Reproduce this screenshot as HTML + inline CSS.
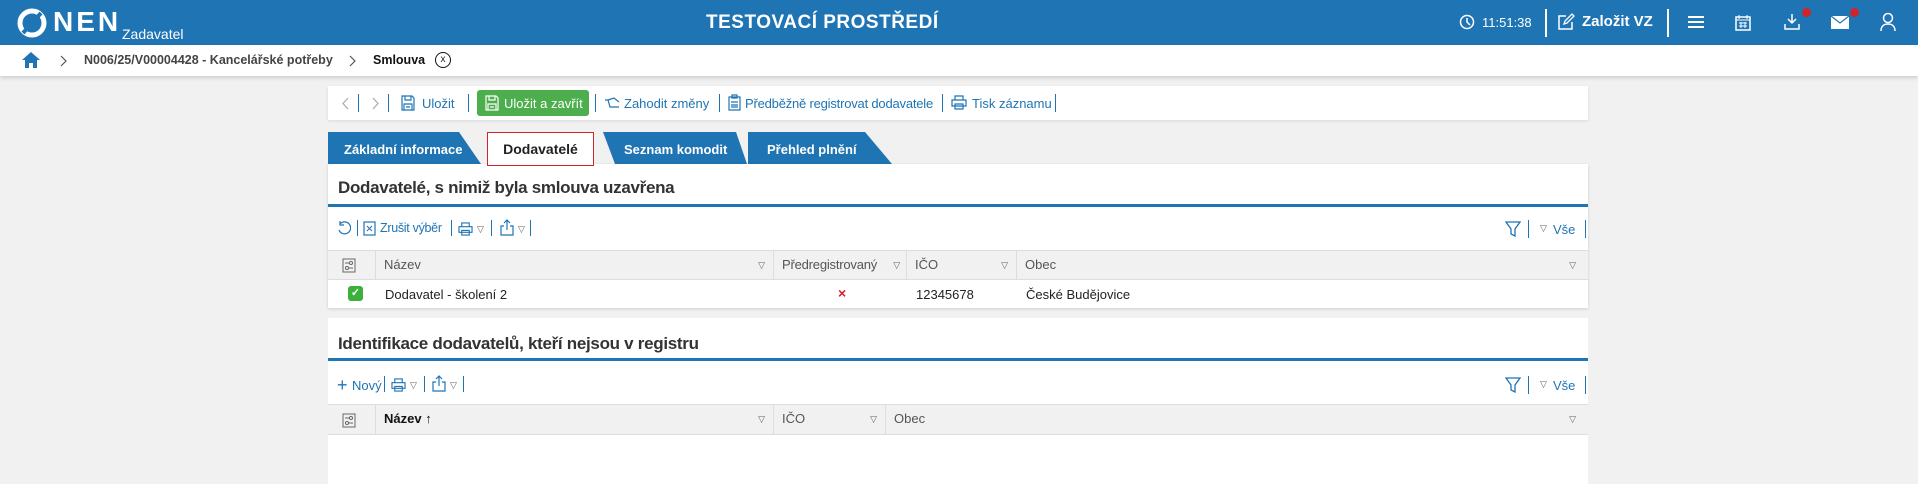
<!DOCTYPE html>
<html><head><meta charset="utf-8"><style>
*{box-sizing:border-box;margin:0;padding:0}
body{width:1918px;height:484px;overflow:hidden;background:#f1f1f1;font-family:"Liberation Sans",Arial,sans-serif;font-size:13px;color:#222;position:relative}
.abs{position:absolute}
.hdr{left:0;top:0;width:1918px;height:45px;background:#1f74b4;color:#fff}
.bc{left:0;top:45px;width:1918px;height:31px;background:#fff;box-shadow:0 2px 4px rgba(0,0,0,.15)}
.blue{color:#1f74b4}
.sep{position:absolute;width:1px;background:#1f74b4}
.tb{left:328px;top:86px;width:1260px;height:34px;background:#fff;box-shadow:0 1px 3px rgba(0,0,0,.1)}
.tab{position:absolute;top:132px;height:32px;background:#1f74b4;color:#fff;font-weight:bold;font-size:13px;line-height:36px}
.sec{position:absolute;left:328px;width:1260px;background:#fff}
.title{position:absolute;left:10px;font-size:17px;font-weight:bold;color:#333;letter-spacing:-.3px}
.bl{position:absolute;left:0;width:1260px;height:3px;background:#1f74b4}
.gh{position:absolute;left:0;width:1260px;background:#f1f1f1;border-top:1px solid #ddd;border-bottom:1px solid #ddd}
.col{position:absolute;top:0;bottom:0;border-left:1px solid #ddd;color:#555;line-height:28px;padding-left:8px}
.tri{position:absolute;font-size:9px;color:#666}
</style></head><body>
<div class="abs hdr">
 <svg class="abs" style="left:17px;top:8px" width="30" height="30" viewBox="0 0 30 30"><circle cx="15" cy="15" r="12" fill="none" stroke="#fff" stroke-width="5"/><path d="M6 25 L24 5" stroke="#1f74b4" stroke-width="4"/></svg>
 <div class="abs" style="left:53px;top:6px;font-size:28px;font-weight:bold;letter-spacing:3px">NEN</div>
 <div class="abs" style="left:122px;top:26px;font-size:14px">Zadavatel</div>
 <div class="abs" style="left:706px;top:12px;font-size:19px;font-weight:bold;letter-spacing:.5px">TESTOVACÍ PROSTŘEDÍ</div>
 <svg class="abs" style="left:1459px;top:14px" width="16" height="16" viewBox="0 0 16 16"><circle cx="8" cy="8" r="6.5" fill="none" stroke="#fff" stroke-width="1.5"/><path d="M8 4v4l3 3" fill="none" stroke="#fff" stroke-width="1.5"/></svg>
 <div class="abs" style="left:1482px;top:15px;font-size:13px">11:51:38</div>
 <div class="abs" style="left:1545px;top:9px;width:2px;height:28px;background:#fff"></div>
 <svg class="abs" style="left:1557px;top:13px" width="18" height="18" viewBox="0 0 18 18"><path d="M9 3H2v13h13V9" fill="none" stroke="#fff" stroke-width="1.5"/><path d="M7 11l1-3 7-7 2 2-7 7z" fill="none" stroke="#fff" stroke-width="1.3"/></svg>
 <div class="abs" style="left:1582px;top:13px;font-size:15px;font-weight:bold">Založit VZ</div>
 <div class="abs" style="left:1667px;top:9px;width:2px;height:28px;background:#fff"></div>
 <div class="abs" style="left:1688px;top:16px;width:16px;height:2px;background:#fff;box-shadow:0 5px 0 #fff,0 10px 0 #fff"></div>
 <svg class="abs" style="left:1735px;top:14px" width="16" height="17" viewBox="0 0 16 17"><rect x="1" y="3" width="14" height="13" fill="none" stroke="#fff" stroke-width="1.5"/><path d="M1 6h14M4 1v4M12 1v4M4 9h8M4 12h8M6 8v6M10 8v6" stroke="#fff"/></svg>
 <svg class="abs" style="left:1783px;top:13px" width="18" height="18" viewBox="0 0 18 18"><path d="M9 1v9M5 6l4 4 4-4M2 11v5h14v-5" fill="none" stroke="#fff" stroke-width="1.5"/></svg>
 <div class="abs" style="left:1802px;top:8px;width:9px;height:9px;border-radius:50%;background:#d0242b"></div>
 <svg class="abs" style="left:1831px;top:16px" width="18" height="13" viewBox="0 0 18 13"><rect x="0" y="0" width="18" height="13" fill="#fff"/><path d="M0 0l9 7 9-7" fill="none" stroke="#1f74b4" stroke-width="1.2"/></svg>
 <div class="abs" style="left:1850px;top:8px;width:9px;height:9px;border-radius:50%;background:#d0242b"></div>
 <svg class="abs" style="left:1880px;top:12px" width="16" height="20" viewBox="0 0 16 20"><circle cx="8" cy="6" r="4.5" fill="none" stroke="#fff" stroke-width="1.5"/><path d="M1 19c0-5 3-7 7-7s7 2 7 7" fill="none" stroke="#fff" stroke-width="1.5"/></svg>
</div>
<div class="abs bc">
 <svg class="abs" style="left:22px;top:7px" width="18" height="16" viewBox="0 0 18 16"><path d="M9 0L0 8h3v8h4v-5h4v5h4V8h3z" fill="#1f74b4"/></svg>
 <svg class="abs" style="left:60px;top:10px" width="7" height="12" viewBox="0 0 7 12"><path d="M1 1l5 5-5 5" fill="none" stroke="#555" stroke-width="1.2"/></svg>
 <div class="abs" style="left:84px;top:8px;color:#444;font-weight:bold;font-size:12.5px">N006/25/V00004428 - Kancelářské potřeby</div>
 <svg class="abs" style="left:349px;top:10px" width="7" height="12" viewBox="0 0 7 12"><path d="M1 1l5 5-5 5" fill="none" stroke="#555" stroke-width="1.2"/></svg>
 <div class="abs" style="left:373px;top:8px;color:#111;font-weight:bold;font-size:12.5px">Smlouva</div>
 <div class="abs" style="left:435px;top:7px;width:16px;height:16px;border:1.5px solid #111;border-radius:50%;font-size:10px;text-align:center;line-height:13px">x</div>
</div>
<div class="abs tb">
 <svg class="abs" style="left:14px;top:11px" width="7" height="13" viewBox="0 0 7 13"><path d="M6 1L1 6.5 6 12" fill="none" stroke="#aaa" stroke-width="1.2"/></svg>
 <div class="sep" style="left:30px;top:8px;height:18px"></div>
 <svg class="abs" style="left:44px;top:11px" width="7" height="13" viewBox="0 0 7 13"><path d="M1 1l5 5.5L1 12" fill="none" stroke="#aaa" stroke-width="1.2"/></svg>
 <div class="sep" style="left:60px;top:8px;height:18px"></div>
 <svg class="abs" style="left:73px;top:9px" width="14" height="16" viewBox="0 0 14 16"><path d="M1 1h10l2 2v12H1z M4 1v4h6V1 M3 9h8v6H3z M5 12h4" fill="none" stroke="#1f74b4" stroke-width="1.2"/></svg>
 <div class="abs blue" style="left:94px;top:10px">Uložit</div>
 <div class="sep" style="left:140px;top:8px;height:18px"></div>
 <div class="abs" style="left:149px;top:4px;width:112px;height:26px;background:#4cae4c;border-radius:3px;color:#fff"><svg class="abs" style="left:8px;top:5px" width="14" height="16" viewBox="0 0 14 16"><path d="M1 1h10l2 2v12H1z M4 1v4h6V1 M3 9h8v6H3z M5 12h4" fill="none" stroke="#fff" stroke-width="1.2"/></svg><span class="abs" style="left:27px;top:6px">Uložit a zavřít</span></div>
 <div class="sep" style="left:267px;top:8px;height:18px"></div>
 <svg class="abs" style="left:276px;top:11px" width="16" height="12" viewBox="0 0 16 12"><path d="M1 3h3l2 7h9M4 3l6-2 5 4" fill="none" stroke="#1f74b4" stroke-width="1.2"/></svg>
 <div class="abs blue" style="left:296px;top:10px">Zahodit změny</div>
 <div class="sep" style="left:391px;top:8px;height:18px"></div>
 <svg class="abs" style="left:400px;top:8px" width="13" height="17" viewBox="0 0 13 17"><path d="M1 3h11v13H1z M4 1h5v3H4z M3 8h7M3 11h7M3 13h7" fill="none" stroke="#1f74b4" stroke-width="1.2"/></svg>
 <div class="abs blue" style="left:417px;top:10px;letter-spacing:-.2px">Předběžně registrovat dodavatele</div>
 <div class="sep" style="left:614px;top:8px;height:18px"></div>
 <svg class="abs" style="left:623px;top:9px" width="16" height="15" viewBox="0 0 16 15"><path d="M4 1h8v4H4z M1 5h14v6H1z M4 9h8v5H4z" fill="none" stroke="#1f74b4" stroke-width="1.2"/></svg>
 <div class="abs blue" style="left:644px;top:10px">Tisk záznamu</div>
 <div class="sep" style="left:727px;top:8px;height:18px"></div>
</div>
<div class="tab" style="left:328px;width:153px;clip-path:polygon(0 0,131px 0,153px 100%,0 100%);padding-left:16px">Základní informace</div>
<div class="abs" style="left:487px;top:132px;width:107px;height:34px;background:#fff;border:1px solid #d0242b;font-weight:bold;font-size:14px;text-align:center;line-height:32px;z-index:2">Dodavatelé</div>
<div class="tab" style="left:603px;width:144px;clip-path:polygon(0 0,133px 0,144px 100%,12px 100%);padding-left:21px">Seznam komodit</div>
<div class="tab" style="left:748px;width:144px;clip-path:polygon(0 0,117px 0,144px 100%,0 100%);padding-left:19px">Přehled plnění</div>
<div class="sec" style="top:164px;height:144px;box-shadow:0 1px 3px rgba(0,0,0,.15)">
 <div class="title" style="top:14px">Dodavatelé, s nimiž byla smlouva uzavřena</div>
 <div class="bl" style="top:40px"></div>
 <svg class="abs" style="left:9px;top:57px" width="14" height="14" viewBox="0 0 14 14"><path d="M3 3a6 6 0 1 1-1 6M3 0v4h4" fill="none" stroke="#1f74b4" stroke-width="1.2"/></svg>
 <div class="sep" style="left:29px;top:56px;height:16px"></div>
 <svg class="abs" style="left:35px;top:57px" width="13" height="15" viewBox="0 0 13 15"><rect x="1" y="1" width="11" height="13" fill="none" stroke="#1f74b4" stroke-width="1.2"/><path d="M4 5l5 5M9 5l-5 5" stroke="#1f74b4"/></svg>
 <div class="abs blue" style="left:52px;top:57px;font-size:12.5px;letter-spacing:-.3px">Zrušit výběr</div>
 <div class="sep" style="left:123px;top:56px;height:16px"></div>
 <svg class="abs" style="left:130px;top:58px" width="15" height="14" viewBox="0 0 16 15"><path d="M4 1h8v4H4z M1 5h14v6H1z M4 9h8v5H4z" fill="none" stroke="#1f74b4" stroke-width="1.2"/></svg>
 <div class="tri blue" style="left:149px;top:60px">▽</div>
 <div class="sep" style="left:163px;top:56px;height:16px"></div>
 <svg class="abs" style="left:172px;top:55px" width="14" height="17" viewBox="0 0 14 17"><path d="M7 11V1M4 4l3-3 3 3M4 7H1v9h12V7h-3" fill="none" stroke="#1f74b4" stroke-width="1.2"/></svg>
 <div class="tri blue" style="left:190px;top:60px">▽</div>
 <div class="sep" style="left:202px;top:56px;height:16px"></div>
 <svg class="abs" style="left:1177px;top:57px" width="16" height="16" viewBox="0 0 16 16"><path d="M1 1h14l-5 7v7l-4-2V8z" fill="none" stroke="#1f74b4" stroke-width="1.3"/></svg>
 <div class="sep" style="left:1200px;top:56px;height:18px"></div>
 <div class="tri blue" style="left:1212px;top:59px">▽</div>
 <div class="abs blue" style="left:1225px;top:58px">Vše</div>
 <div class="sep" style="left:1257px;top:56px;height:18px"></div>
 <div class="gh" style="top:86px;height:30px">
  <div class="col" style="left:0;width:47px;border-left:none"><svg style="position:absolute;left:14px;top:7px" width="14" height="15" viewBox="0 0 14 15"><rect x="1" y="1" width="12" height="13" fill="none" stroke="#666"/><path d="M3 5h8M3 10h8" stroke="#666"/><circle cx="9" cy="5" r="1.5" fill="#fff" stroke="#666"/><circle cx="5" cy="10" r="1.5" fill="#fff" stroke="#666"/></svg></div>
  <div class="col" style="left:47px;width:398px">Název<span class="tri" style="right:8px;top:0">▽</span></div>
  <div class="col" style="left:445px;width:133px;letter-spacing:-.2px">Předregistrovaný<span class="tri" style="right:6px;top:0">▽</span></div>
  <div class="col" style="left:578px;width:110px">IČO<span class="tri" style="right:8px;top:0">▽</span></div>
  <div class="col" style="left:688px;width:572px">Obec<span class="tri" style="right:12px;top:0">▽</span></div>
 </div>
 <div class="abs" style="left:20px;top:122px;width:15px;height:15px;background:#3bb13b;border-radius:3px;color:#fff;font-size:11px;text-align:center;line-height:15px;font-weight:bold">✓</div>
 <div class="abs" style="left:57px;top:123px">Dodavatel - školení 2</div>
 <div class="abs" style="left:510px;top:121px;color:#d0242b;font-weight:bold;font-size:14px">×</div>
 <div class="abs" style="left:588px;top:123px">12345678</div>
 <div class="abs" style="left:698px;top:123px">České Budějovice</div>
</div>
<div class="sec" style="top:318px;height:166px">
 <div class="title" style="top:16px">Identifikace dodavatelů, kteří nejsou v registru</div>
 <div class="bl" style="top:40px"></div>
 <div class="abs blue" style="left:9px;top:58px;font-size:18px;line-height:18px">+</div>
 <div class="abs blue" style="left:24px;top:60px">Nový</div>
 <div class="sep" style="left:56px;top:58px;height:16px"></div>
 <svg class="abs" style="left:63px;top:60px" width="15" height="14" viewBox="0 0 16 15"><path d="M4 1h8v4H4z M1 5h14v6H1z M4 9h8v5H4z" fill="none" stroke="#1f74b4" stroke-width="1.2"/></svg>
 <div class="tri blue" style="left:82px;top:62px">▽</div>
 <div class="sep" style="left:96px;top:58px;height:16px"></div>
 <svg class="abs" style="left:104px;top:57px" width="14" height="17" viewBox="0 0 14 17"><path d="M7 11V1M4 4l3-3 3 3M4 7H1v9h12V7h-3" fill="none" stroke="#1f74b4" stroke-width="1.2"/></svg>
 <div class="tri blue" style="left:122px;top:62px">▽</div>
 <div class="sep" style="left:135px;top:58px;height:16px"></div>
 <svg class="abs" style="left:1177px;top:59px" width="16" height="16" viewBox="0 0 16 16"><path d="M1 1h14l-5 7v7l-4-2V8z" fill="none" stroke="#1f74b4" stroke-width="1.3"/></svg>
 <div class="sep" style="left:1200px;top:58px;height:18px"></div>
 <div class="tri blue" style="left:1212px;top:61px">▽</div>
 <div class="abs blue" style="left:1225px;top:60px">Vše</div>
 <div class="sep" style="left:1257px;top:58px;height:18px"></div>
 <div class="gh" style="top:86px;height:31px">
  <div class="col" style="left:0;width:47px;border-left:none"><svg style="position:absolute;left:14px;top:8px" width="14" height="15" viewBox="0 0 14 15"><rect x="1" y="1" width="12" height="13" fill="none" stroke="#666"/><path d="M3 5h8M3 10h8" stroke="#666"/><circle cx="9" cy="5" r="1.5" fill="#fff" stroke="#666"/><circle cx="5" cy="10" r="1.5" fill="#fff" stroke="#666"/></svg></div>
  <div class="col" style="left:47px;width:398px;color:#111;font-weight:bold">Název ↑<span class="tri" style="right:8px;top:0;font-weight:normal">▽</span></div>
  <div class="col" style="left:445px;width:112px">IČO<span class="tri" style="right:8px;top:0">▽</span></div>
  <div class="col" style="left:557px;width:703px">Obec<span class="tri" style="right:12px;top:0">▽</span></div>
 </div>
</div>
</body></html>
